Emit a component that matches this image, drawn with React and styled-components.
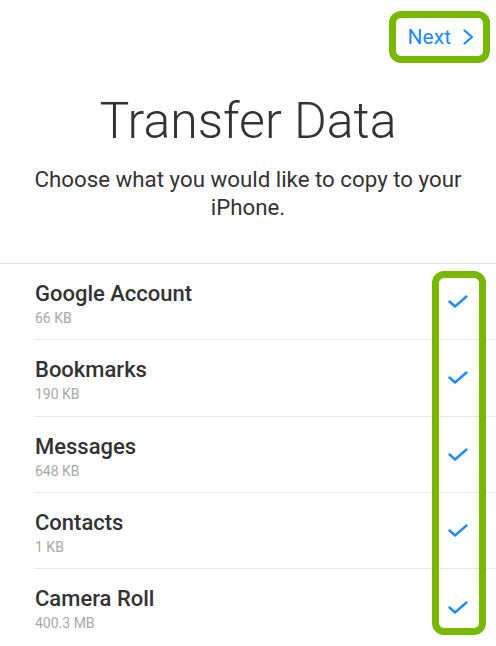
import React from "react";
import styled, { createGlobalStyle } from "styled-components";

const GlobalStyle = createGlobalStyle`
  html, body {
    margin: 0;
    padding: 0;
    background: #fff;
  }
  body {
    font-family: Roboto, "Liberation Sans", sans-serif;
    color: #333;
  }
`;

const HIGHLIGHT = "#76b900";
const BLUE = "#1a8cff";

const Screen = styled.div`
  width: 496px;
  height: 646px;
  overflow: hidden;
  display: flex;
  flex-direction: column;
`;

const TopBar = styled.div`
  display: flex;
  justify-content: flex-end;
  padding: 11px 6px 0 0;
`;

const NextButton = styled.button`
  display: flex;
  align-items: center;
  gap: 12px;
  box-sizing: border-box;
  height: 52px;
  padding: 0 9px 0 12px;
  border: 7px solid ${HIGHLIGHT};
  border-radius: 12px;
  background: #fff;
  color: ${BLUE};
  font-family: Roboto, "Liberation Sans", sans-serif;
  font-size: 21px;
  line-height: 1;
  cursor: pointer;
`;

const Title = styled.h1`
  margin: 28px 0 0;
  font-size: 50px;
  font-weight: 300;
  line-height: 60px;
  text-align: center;
  color: #333;
`;

const Subtitle = styled.p`
  margin: 14px 26px 0;
  font-size: 22.3px;
  line-height: 28px;
  text-align: center;
  color: #333;
`;

const List = styled.ul`
  position: relative;
  list-style: none;
  margin: 42px 0 0;
  padding: 0;
  border-top: 1px solid #e2e2e2;
`;

const Row = styled.li`
  display: flex;
  align-items: center;
  justify-content: space-between;
  box-sizing: border-box;
  height: 76.25px;
  margin-left: 35px;
  padding-right: 28px;
  border-bottom: 1px solid #e6e6e6;

  &:last-of-type {
    border-bottom: none;
  }
`;

const Info = styled.div`
  align-self: flex-start;
  display: flex;
  flex-direction: column;
  gap: 2px;
  padding-top: 17px;
`;

const Name = styled.span`
  font-size: 22px;
  font-weight: 500;
  line-height: 26px;
  color: #333;
`;

const Size = styled.span`
  font-size: 14px;
  line-height: 18px;
  color: #a8a8a8;
`;

const Highlight = styled.div`
  position: absolute;
  top: 7px;
  left: 432px;
  width: 54px;
  height: 364px;
  box-sizing: border-box;
  border: 7px solid ${HIGHLIGHT};
  border-radius: 12px;
  pointer-events: none;
`;

const Chevron = () => (
  <svg width="11" height="16" viewBox="0 0 11 16" fill="none">
    <polyline
      points="1.5,1.5 9,8 1.5,14.5"
      stroke={BLUE}
      strokeWidth="2.2"
      strokeLinecap="round"
      strokeLinejoin="round"
    />
  </svg>
);

const Check = () => (
  <svg width="20" height="13" viewBox="0 0 20 13" fill="none">
    <polyline
      points="1.5,6.5 7,11.5 18.5,1.5"
      stroke={BLUE}
      strokeWidth="2.4"
      strokeLinecap="round"
      strokeLinejoin="round"
    />
  </svg>
);

const items = [
  { name: "Google Account", size: "66 KB" },
  { name: "Bookmarks", size: "190 KB" },
  { name: "Messages", size: "648 KB" },
  { name: "Contacts", size: "1 KB" },
  { name: "Camera Roll", size: "400.3 MB" },
];

const App = () => (
  <Screen>
    <GlobalStyle />
    <TopBar>
      <NextButton>
        Next
        <Chevron />
      </NextButton>
    </TopBar>
    <Title>Transfer Data</Title>
    <Subtitle>Choose what you would like to copy to your iPhone.</Subtitle>
    <List>
      {items.map((item) => (
        <Row key={item.name}>
          <Info>
            <Name>{item.name}</Name>
            <Size>{item.size}</Size>
          </Info>
          <Check />
        </Row>
      ))}
      <Highlight />
    </List>
  </Screen>
);

export default App;
